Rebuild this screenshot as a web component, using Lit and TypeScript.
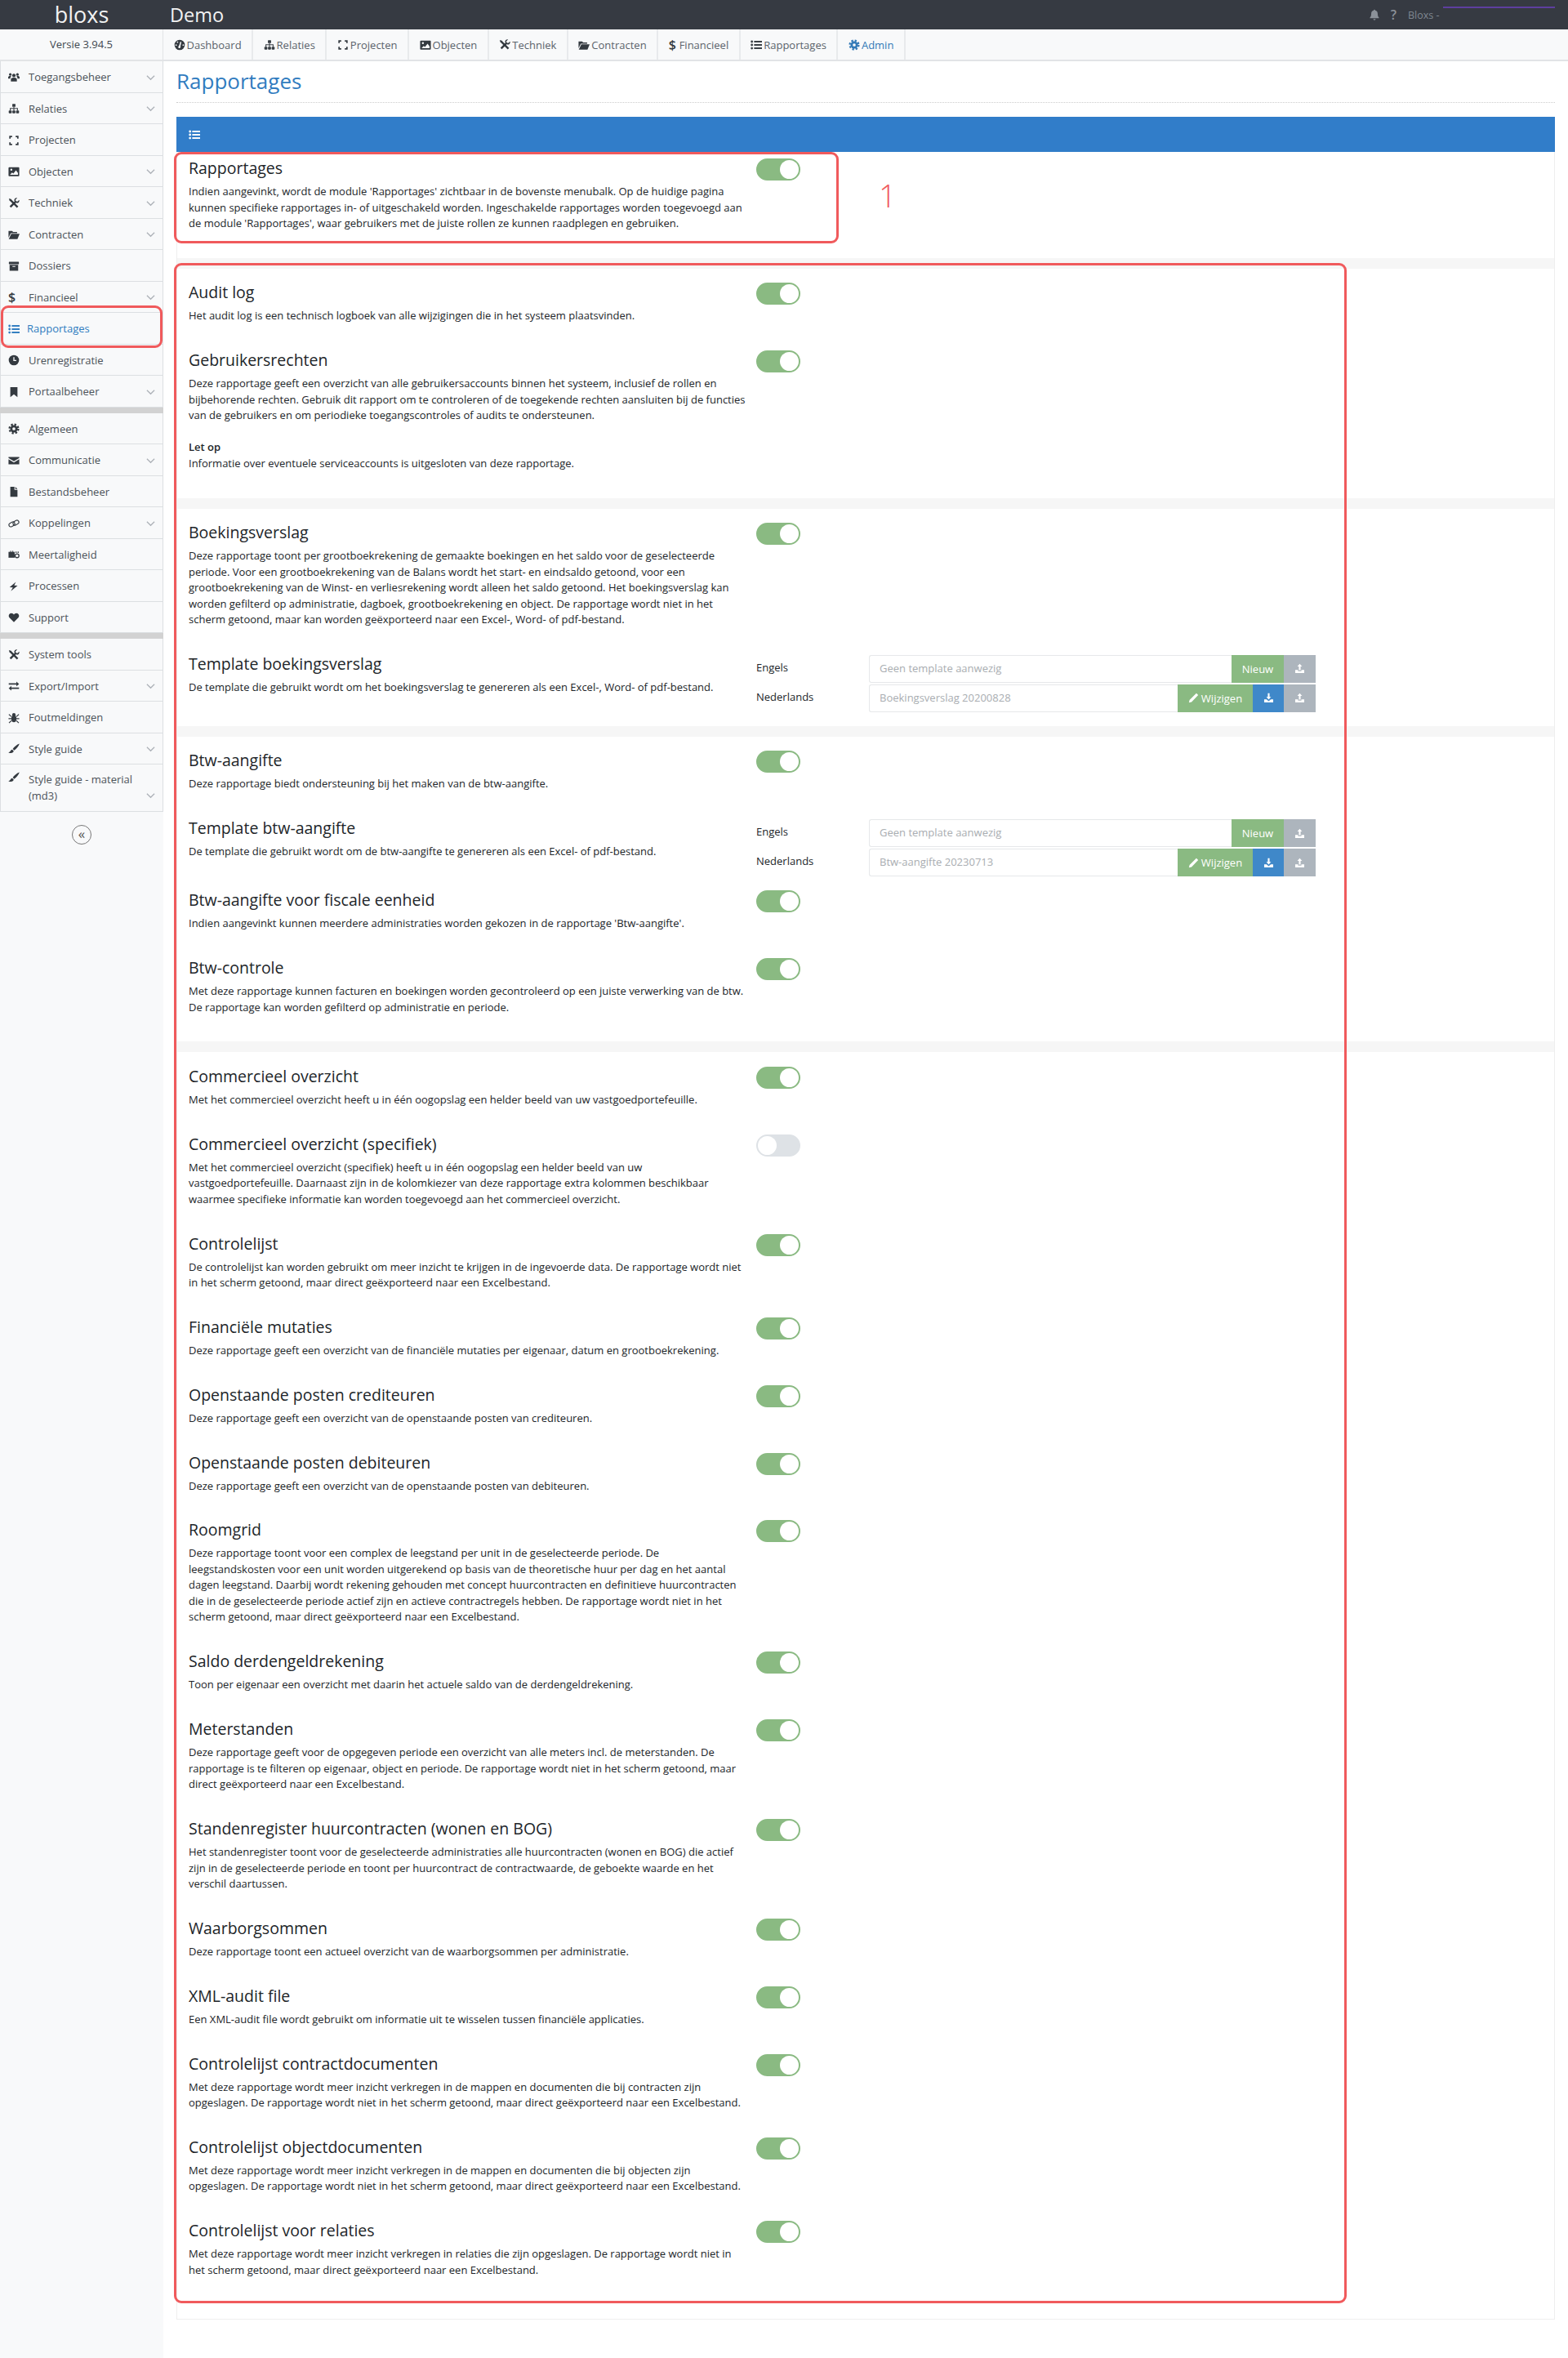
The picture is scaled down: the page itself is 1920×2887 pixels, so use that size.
import { LitElement, html, css, svg } from "lit";
import { customElement } from "lit/decorators.js";

const ICONS: Record<string, any> = {
  users: svg`<circle cx="8" cy="5" r="2.4"/><circle cx="3" cy="3.6" r="1.8"/><circle cx="13" cy="3.6" r="1.8"/><path d="M3.8 13.5v-3C3.8 9 5.5 8 8 8s4.2 1 4.2 2.5v3zM0 9.5V7.6C0 6.4 1 5.8 3 5.8c.6 0 1 .1 1.4.2C3.5 6.8 3 7.8 3 9.5zM16 9.5V7.6c0-1.2-1-1.8-3-1.8-.6 0-1 .1-1.4.2.9.8 1.4 1.8 1.4 3.5z"/>`,
  sitemap: svg`<rect x="5.8" y="1.5" width="4.4" height="4" rx=".6"/><rect x="3.2" y="7.2" width="9.6" height="1.1"/><rect x="7.4" y="5.5" width="1.2" height="5"/><rect x="2.4" y="7.2" width="1.2" height="3.3"/><rect x="12.4" y="7.2" width="1.2" height="3.3"/><rect x=".8" y="10.5" width="4.2" height="4" rx="1"/><rect x="5.9" y="10.5" width="4.2" height="4" rx="1"/><rect x="11" y="10.5" width="4.2" height="4" rx="1"/>`,
  expand: svg`<path d="M2.5 5.5V2.5h3M10.5 2.5h3v3M13.5 10.5v3h-3M5.5 13.5h-3v-3" fill="none" stroke="currentColor" stroke-width="2"/>`,
  image: svg`<rect x=".5" y="2" width="15" height="12.5" rx="1"/><circle cx="4.4" cy="5.4" r="1.4" fill="#f8f9fa"/><path d="M2.5 12.5l3-3.2 1.8 1.6 3.6-4.6 2.8 3.6v2.6z" fill="#f8f9fa"/>`,
  tools: svg`<path d="M2.6 2.6l10.6 10.6" fill="none" stroke="currentColor" stroke-width="2.8"/><path d="M11 5L3 13" fill="none" stroke="currentColor" stroke-width="2.8"/><path d="M15.5 3.2l-2.6 2.3-2.2-.4-.4-2.2L12.8.4c-2.5-.6-4.6 1.2-4.2 3.8l3.2 3.2c2.6.4 4.3-1.7 3.7-4.2zM1 1l2.6.9.8 1.8-.8.8-1.8-.8z"/>`,
  folder: svg`<path d="M.5 3h5l1.4 1.5h5.6V6.3H3.7L.5 12.5zM4.4 7.2H16l-3 7.3H.8z"/>`,
  archive: svg`<rect x="1" y="1.8" width="14" height="3.2" rx=".4"/><path fill-rule="evenodd" d="M2 6h12v8.4H2zM6 7.6v1.2h4V7.6z"/>`,
  list: svg`<circle cx="1.9" cy="3.4" r="1.6"/><circle cx="1.9" cy="8" r="1.6"/><circle cx="1.9" cy="12.6" r="1.6"/><rect x="5" y="2.3" width="11" height="2.2"/><rect x="5" y="6.9" width="11" height="2.2"/><rect x="5" y="11.5" width="11" height="2.2"/>`,
  clock: svg`<circle cx="8" cy="8" r="7.2"/><path d="M8 3.8v4.6h3.4" fill="none" stroke="#f8f9fa" stroke-width="1.5"/>`,
  bookmark: svg`<path d="M3 1.2h10v13.8L8 11.2 3 15z"/>`,
  cog: svg`<circle cx="8" cy="8" r="5.2"/><circle cx="8" cy="8" r="6.2" fill="none" stroke="currentColor" stroke-width="2.6" stroke-dasharray="2.6 2.27"/><circle cx="8" cy="8" r="2.1" fill="#f8f9fa"/>`,
  envelope: svg`<path d="M.5 2.8h15v1.4L8 8.8.5 4.2zM.5 6l7.5 4.6L15.5 6v7.2H.5z"/>`,
  file: svg`<path d="M3 1h5.8v4.4H13V15H3zM10 1l3 3.2h-3z"/>`,
  link: svg`<g fill="none" stroke="currentColor" stroke-width="1.3"><rect x=".8" y="6.6" width="8.6" height="5.2" rx="2.6" transform="rotate(-30 5 9)"/><rect x="6.6" y="4.2" width="8.6" height="5.2" rx="2.6" transform="rotate(-30 11 7)"/></g>`,
  language: svg`<path d="M.5 4.2h8.6v8.2H.5z"/><circle cx="12.4" cy="9.6" r="2.7" fill="none" stroke="currentColor" stroke-width="1.5"/><circle cx="11" cy="4.6" r="1"/><circle cx="14" cy="4.6" r="1"/><rect x="3" y="2.6" width="1" height="2"/><rect x="6" y="2.6" width="1" height="2"/>`,
  bolt: svg`<path d="M10.8 1.8L2 9.2l4.6.2-2.8 5.2 9.4-7.8-4.8-.2z"/>`,
  heart: svg`<path d="M8 14.5L1.8 8.3C-.5 5.5 1.5 2 4.5 2 6 2 7.2 2.8 8 4c.8-1.2 2-2 3.5-2 3 0 5 3.5 2.7 6.3z"/>`,
  exchange: svg`<path d="M.8 4h10.7V1.7L15.3 5l-3.8 3.3V6H.8zM15.2 10H4.5V7.7L.7 11l3.8 3.3V12h10.7z"/>`,
  bug: svg`<ellipse cx="8" cy="9.2" rx="3.6" ry="4.8"/><circle cx="8" cy="3.6" r="2.4"/><path d="M1 3l3.4 3.2M15 3l-3.4 3.2M.5 9h4M15.5 9h-4M1.2 15l3.2-3.2M14.8 15l-3.2-3.2" fill="none" stroke="currentColor" stroke-width="1.4"/>`,
  brush: svg`<path d="M15.8.6c-3.4 1.2-7.6 4.6-9.4 7.4l2 2c2.8-1.8 6.2-5.6 7.4-9.4zM5.6 8.8c-2.4.4-1.8 3.2-5.4 4 3 1.8 7.6 1.2 7.4-2.2z"/>`,
  dash: svg`<path fill-rule="evenodd" d="M8 .8a7.2 7.2 0 110 14.4A7.2 7.2 0 018 .8zM5 3a1 1 0 100 2 1 1 0 000-2zm4 .5L7 9.4a1.6 1.6 0 102 .6l1.4-6zM3 7.2a1 1 0 100 2 1 1 0 000-2zm10 0a1 1 0 100 2 1 1 0 000-2z"/>`,
  bell: svg`<path d="M8 .8a1 1 0 011 1.2c2.2.4 3.5 2.2 3.5 4.5 0 3 .7 4.4 1.8 5.4v1H1.7v-1c1.1-1 1.8-2.4 1.8-5.4 0-2.3 1.3-4.1 3.5-4.5A1 1 0 018 .8zM6.3 14h3.4a1.7 1.7 0 01-3.4 0z"/>`,
  upload: svg`<path d="M8 1l3.6 4H9.3v5.6H6.7V5H4.4zM1.2 10.2h4.3v1.9h5v-1.9h4.3v4.6H1.2z"/>`,
  download: svg`<path d="M6.7 1h2.6v5.4h2.3L8 10.6 4.4 6.4h2.3zM1.2 10.2h3.5L8 13l3.3-2.8h3.5v4.6H1.2z"/>`,
  pencil: svg`<path d="M12.2 1l2.8 2.8L5 14 1 15l1-4zM11 3.2l1.8 1.8"/>`,
};

const icon = (name: string, cls = "ic") =>
  html`<svg class=${cls} viewBox="0 0 16 16" fill="currentColor">${ICONS[name]}</svg>`;

const chevron = html`<svg class="chev" viewBox="0 0 12 8"><path d="M1 1.5l5 5 5-5" fill="none" stroke="currentColor" stroke-width="1.4"/></svg>`;

type Side = { i?: string; t: string; c?: boolean; active?: boolean; two?: boolean; sep?: boolean };
const SIDE: Side[] = [
  { i: "users", t: "Toegangsbeheer", c: true },
  { i: "sitemap", t: "Relaties", c: true },
  { i: "expand", t: "Projecten" },
  { i: "image", t: "Objecten", c: true },
  { i: "tools", t: "Techniek", c: true },
  { i: "folder", t: "Contracten", c: true },
  { i: "archive", t: "Dossiers" },
  { t: "Financieel", c: true },
  { i: "list", t: "Rapportages", active: true },
  { i: "clock", t: "Urenregistratie" },
  { i: "bookmark", t: "Portaalbeheer", c: true },
  { sep: true, t: "" },
  { i: "cog", t: "Algemeen" },
  { i: "envelope", t: "Communicatie", c: true },
  { i: "file", t: "Bestandsbeheer" },
  { i: "link", t: "Koppelingen", c: true },
  { i: "language", t: "Meertaligheid" },
  { i: "bolt", t: "Processen" },
  { i: "heart", t: "Support" },
  { sep: true, t: "" },
  { i: "tools", t: "System tools" },
  { i: "exchange", t: "Export/Import", c: true },
  { i: "bug", t: "Foutmeldingen" },
  { i: "brush", t: "Style guide", c: true },
  { i: "brush", t: "Style guide - material\n(md3)", c: true, two: true },
];

const NAV = [
  { i: "dash", t: "Dashboard" },
  { i: "sitemap", t: "Relaties" },
  { i: "expand", t: "Projecten" },
  { i: "image", t: "Objecten" },
  { i: "tools", t: "Techniek" },
  { i: "folder", t: "Contracten" },
  { t: "Financieel" },
  { i: "list", t: "Rapportages" },
  { i: "cog", t: "Admin", admin: true },
];

type Row = { t: string; d: string; off?: boolean; tpl?: string };
const SECTIONS: { first?: boolean; last?: boolean; rows: Row[] }[] = [
  {
    first: true,
    rows: [
      {
        t: "Rapportages",
        d: "Indien aangevinkt, wordt de module 'Rapportages' zichtbaar in de bovenste menubalk. Op de huidige pagina\nkunnen specifieke rapportages in- of uitgeschakeld worden. Ingeschakelde rapportages worden toegevoegd aan\nde module 'Rapportages', waar gebruikers met de juiste rollen ze kunnen raadplegen en gebruiken.",
      },
    ],
  },
  {
    rows: [
      { t: "Audit log", d: "Het audit log is een technisch logboek van alle wijzigingen die in het systeem plaatsvinden." },
      {
        t: "Gebruikersrechten",
        d: "Deze rapportage geeft een overzicht van alle gebruikersaccounts binnen het systeem, inclusief de rollen en\nbijbehorende rechten. Gebruik dit rapport om te controleren of de toegekende rechten aansluiten bij de functies\nvan de gebruikers en om periodieke toegangscontroles of audits te ondersteunen.\n\n<b>Let op</b>\nInformatie over eventuele serviceaccounts is uitgesloten van deze rapportage.",
      },
    ],
  },
  {
    rows: [
      {
        t: "Boekingsverslag",
        d: "Deze rapportage toont per grootboekrekening de gemaakte boekingen en het saldo voor de geselecteerde\nperiode. Voor een grootboekrekening van de Balans wordt het start- en eindsaldo getoond, voor een\ngrootboekrekening van de Winst- en verliesrekening wordt alleen het saldo getoond. Het boekingsverslag kan\nworden gefilterd op administratie, dagboek, grootboekrekening en object. De rapportage wordt niet in het\nscherm getoond, maar kan worden geëxporteerd naar een Excel-, Word- of pdf-bestand.",
      },
      {
        t: "Template boekingsverslag",
        d: "De template die gebruikt wordt om het boekingsverslag te genereren als een Excel-, Word- of pdf-bestand.",
        tpl: "Boekingsverslag 20200828",
      },
    ],
  },
  {
    rows: [
      { t: "Btw-aangifte", d: "Deze rapportage biedt ondersteuning bij het maken van de btw-aangifte." },
      {
        t: "Template btw-aangifte",
        d: "De template die gebruikt wordt om de btw-aangifte te genereren als een Excel- of pdf-bestand.",
        tpl: "Btw-aangifte 20230713",
      },
      { t: "Btw-aangifte voor fiscale eenheid", d: "Indien aangevinkt kunnen meerdere administraties worden gekozen in de rapportage 'Btw-aangifte'." },
      {
        t: "Btw-controle",
        d: "Met deze rapportage kunnen facturen en boekingen worden gecontroleerd op een juiste verwerking van de btw.\nDe rapportage kan worden gefilterd op administratie en periode.",
      },
    ],
  },
  {
    last: true,
    rows: [
      { t: "Commercieel overzicht", d: "Met het commercieel overzicht heeft u in één oogopslag een helder beeld van uw vastgoedportefeuille." },
      {
        t: "Commercieel overzicht (specifiek)",
        off: true,
        d: "Met het commercieel overzicht (specifiek) heeft u in één oogopslag een helder beeld van uw\nvastgoedportefeuille. Daarnaast zijn in de kolomkiezer van deze rapportage extra kolommen beschikbaar\nwaarmee specifieke informatie kan worden toegevoegd aan het commercieel overzicht.",
      },
      {
        t: "Controlelijst",
        d: "De controlelijst kan worden gebruikt om meer inzicht te krijgen in de ingevoerde data. De rapportage wordt niet\nin het scherm getoond, maar direct geëxporteerd naar een Excelbestand.",
      },
      { t: "Financiële mutaties", d: "Deze rapportage geeft een overzicht van de financiële mutaties per eigenaar, datum en grootboekrekening." },
      { t: "Openstaande posten crediteuren", d: "Deze rapportage geeft een overzicht van de openstaande posten van crediteuren." },
      { t: "Openstaande posten debiteuren", d: "Deze rapportage geeft een overzicht van de openstaande posten van debiteuren." },
      {
        t: "Roomgrid",
        d: "Deze rapportage toont voor een complex de leegstand per unit in de geselecteerde periode. De\nleegstandskosten voor een unit worden uitgerekend op basis van de theoretische huur per dag en het aantal\ndagen leegstand. Daarbij wordt rekening gehouden met concept huurcontracten en definitieve huurcontracten\ndie in de geselecteerde periode actief zijn en actieve contractregels hebben. De rapportage wordt niet in het\nscherm getoond, maar direct geëxporteerd naar een Excelbestand.",
      },
      { t: "Saldo derdengeldrekening", d: "Toon per eigenaar een overzicht met daarin het actuele saldo van de derdengeldrekening." },
      {
        t: "Meterstanden",
        d: "Deze rapportage geeft voor de opgegeven periode een overzicht van alle meters incl. de meterstanden. De\nrapportage is te filteren op eigenaar, object en periode. De rapportage wordt niet in het scherm getoond, maar\ndirect geëxporteerd naar een Excelbestand.",
      },
      {
        t: "Standenregister huurcontracten (wonen en BOG)",
        d: "Het standenregister toont voor de geselecteerde administraties alle huurcontracten (wonen en BOG) die actief\nzijn in de geselecteerde periode en toont per huurcontract de contractwaarde, de geboekte waarde en het\nverschil daartussen.",
      },
      { t: "Waarborgsommen", d: "Deze rapportage toont een actueel overzicht van de waarborgsommen per administratie." },
      { t: "XML-audit file", d: "Een XML-audit file wordt gebruikt om informatie uit te wisselen tussen financiële applicaties." },
      {
        t: "Controlelijst contractdocumenten",
        d: "Met deze rapportage wordt meer inzicht verkregen in de mappen en documenten die bij contracten zijn\nopgeslagen. De rapportage wordt niet in het scherm getoond, maar direct geëxporteerd naar een Excelbestand.",
      },
      {
        t: "Controlelijst objectdocumenten",
        d: "Met deze rapportage wordt meer inzicht verkregen in de mappen en documenten die bij objecten zijn\nopgeslagen. De rapportage wordt niet in het scherm getoond, maar direct geëxporteerd naar een Excelbestand.",
      },
      {
        t: "Controlelijst voor relaties",
        d: "Met deze rapportage wordt meer inzicht verkregen in relaties die zijn opgeslagen. De rapportage wordt niet in\nhet scherm getoond, maar direct geëxporteerd naar een Excelbestand.",
      },
    ],
  },
];

@customElement("app-root")
export class AppRoot extends LitElement {
  static styles = css`
    :host {
      display: block;
      position: relative;
      min-height: 2887px;
      font-family: "Open Sans", "Liberation Sans", sans-serif;
      font-size: 13px;
      color: #212529;
      background: #fff;
    }
    * { box-sizing: border-box; }
    .ic { width: 14px; height: 14px; flex: none; display: block; }
    .top {
      height: 36px;
      background: #363a42;
      display: flex;
      align-items: center;
      color: #f2f2f2;
    }
    .logo { width: 200px; text-align: center; font-size: 27px; line-height: 36px; }
    .demo { margin-left: 8px; font-size: 23.5px; line-height: 36px; flex: 1; }
    .tr { display: flex; align-items: center; color: #8b9199; padding-right: 16px; height: 36px; position: relative; }
    .bell { width: 14px; height: 14px; margin-right: 13px; }
    .q { font-size: 16px; font-weight: 600; margin-right: 14px; }
    .who { font-size: 12.5px; width: 180px; color: #7f8791; }
    .purple { position: absolute; right: 16px; top: 8px; width: 137px; height: 2px; background: #5e3f9f; }
    .body { display: flex; min-height: 2851px; }
    .side { width: 200px; flex: none; background: #f8f9fa; }
    .ver {
      height: 39px;
      text-align: center;
      font-size: 13px;
      line-height: 37px;
      color: #3f4750;
      border-bottom: 2px solid #e2e4e6;
      border-right: 1px solid #e2e4e6;
    }
    .item {
      height: 38.5px;
      display: flex;
      align-items: center;
      padding: 2px 0 0 9px;
      font-size: 13px;
      color: #4b5259;
      border-left: 1px solid #dcdfe2;
      border-right: 1px solid #dcdfe2;
      border-bottom: 1px solid #dcdfe2;
    }
    .item .ic { color: #343a40; }
    .item .lb { margin-left: 11px; flex: 1; white-space: pre-line; line-height: 19.5px; }
    .item.active, .item.active .ic { color: #2f7cc0; }
    .item.active .lb { margin-left: 9px; }
    .item.two { height: 58px; align-items: flex-start; padding-top: 9px; }
    .item.two .chev { margin-top: 25px; }
    .dollar { width: 14px; font-size: 16px; font-weight: 600; color: #343a40; text-align: left; line-height: 16px; }
    .chev { width: 11px; height: 8px; color: #adb2b8; margin-right: 9px; flex: none; }
    .thick { height: 7px; background: #d2d2d2; }
    .coll { display: flex; justify-content: center; padding-top: 16px; }
    .circle {
      width: 24px; height: 24px; border-radius: 50%;
      border: 1px solid #777;
      color: #555;
      display: flex; align-items: center; justify-content: center;
      font-size: 17px; line-height: 18px; padding-bottom: 3px;
    }
    .main { flex: 1; min-width: 0; }
    .nav {
      height: 39px;
      background: #f8f9fa;
      border-bottom: 2px solid #e2e4e6;
      display: flex;
    }
    .nv {
      display: flex; align-items: center; gap: 2px;
      padding: 0 12.5px;
      font-size: 13px;
      color: #5b636b;
      border-right: 2px solid #e8eaec;
      height: 37px;
    }
    .nv .ic { color: #343a40; }
    .nv .dollar { width: 9px; margin-right: 2px; }
    .nv.admin, .nv.admin .ic { color: #337ab7; }
    .content { padding: 0 16px; }
    h1 {
      margin: 0;
      height: 51px;
      font-weight: 400;
      font-size: 26px;
      line-height: 48px;
      color: #317cbf;
      border-bottom: 1px dotted #ccc;
    }
    .panel { margin-top: 17px; border: 1px solid #eee; border-top: 0; }
    .bar { height: 43px; margin: 0 -1px; background: #317dc9; color: #fff; display: flex; align-items: center; padding-left: 15px; }
    .sec { padding: 9.5px 14px 8px; }
    .sec.first { padding-top: 0; }
    .sec.last { padding-bottom: 25px; }
    .sep { height: 13px; background: #f6f6f6; }
    .row { display: flex; padding-top: 8px; }
    .txt { width: 695px; flex: none; padding-bottom: 24.35px; }
    .tt { font-size: 19.5px; line-height: 27px; margin: -2px 0 6px; }
    .ds { white-space: pre-line; line-height: 19.5px; font-size: 13px; }
    .ds b { font-weight: 600; }
    .tog {
      width: 54px; height: 27px; border-radius: 14px;
      background: #8aba82;
      border: 2px solid #8aba82;
      display: flex; justify-content: flex-end;
    }
    .tog::after { content: ""; width: 23px; height: 23px; border-radius: 50%; background: #fff; }
    .tog.off { background: #dee2e6; border-color: #dee2e6; justify-content: flex-start; }
    .tpl { padding: 1px 0 7px; }
    .ln { display: flex; align-items: stretch; height: 34px; width: 685px; margin-bottom: 2px; }
    .lab { width: 138px; font-size: 13px; line-height: 31px; flex: none; color: #212529; }
    .inp {
      flex: 1;
      border: 1px solid #e6e8ea;
      border-right: 0;
      border-radius: 3px 0 0 3px;
      padding-left: 12px;
      font-size: 13px;
      line-height: 31px;
      color: #a9adb1;
    }
    .b { display: flex; align-items: center; justify-content: center; color: #fff; font-size: 13px; gap: 3px; }
    .b .ic { width: 13px; height: 13px; }
    .g { background: #8aba82; }
    .nw { width: 64px; }
    .wz { width: 92px; }
    .bl { background: #3f88c9; width: 38px; }
    .gy { background: #adb5bd; width: 39px; }
    .red { position: absolute; border: 3px solid #f05a5c; border-radius: 9px; pointer-events: none; }
    .r1 { left: 213px; top: 186px; width: 814px; height: 112px; }
    .r2 { left: 213px; top: 322px; width: 1436px; height: 2498px; }
    .r3 { left: 1px; top: 374px; width: 198px; height: 52px; }
    .one { position: absolute; left: 1076px; top: 213px; font-size: 38px; line-height: 52px; font-weight: 300; color: #f05a5c; }
  `;

  private desc(d: string) {
    const m = d.split("<b>");
    if (m.length === 1) return d;
    const [b, rest] = m[1].split("</b>");
    return html`${m[0]}<b>${b}</b>${rest}`;
  }

  private tpl(name: string) {
    return html`<div class="tpl">
      <div class="ln">
        <div class="lab">Engels</div>
        <div class="inp">Geen template aanwezig</div>
        <div class="b g nw">Nieuw</div>
        <div class="b gy">${icon("upload")}</div>
      </div>
      <div class="ln">
        <div class="lab">Nederlands</div>
        <div class="inp">${name}</div>
        <div class="b g wz">${icon("pencil")}Wijzigen</div>
        <div class="b bl">${icon("download")}</div>
        <div class="b gy">${icon("upload")}</div>
      </div>
    </div>`;
  }

  render() {
    return html`
      <div class="top">
        <div class="logo">bloxs</div>
        <div class="demo">Demo</div>
        <div class="tr">
          ${icon("bell", "bell")}
          <span class="q">?</span>
          <span class="who">Bloxs -</span>
          <div class="purple"></div>
        </div>
      </div>
      <div class="body">
        <aside class="side">
          <div class="ver">Versie 3.94.5</div>
          ${SIDE.map((s) =>
            s.sep
              ? html`<div class="thick"></div>`
              : html`<div class="item ${s.active ? "active" : ""} ${s.two ? "two" : ""}">
                  ${s.i ? icon(s.i) : html`<span class="dollar">$</span>`}
                  <span class="lb">${s.t}</span>
                  ${s.c ? chevron : ""}
                </div>`
          )}
          <div class="coll"><div class="circle">«</div></div>
        </aside>
        <div class="main">
          <nav class="nav">
            ${NAV.map(
              (n) => html`<div class="nv ${n.admin ? "admin" : ""}">
                ${n.i ? icon(n.i) : html`<span class="dollar">$</span>`}<span>${n.t}</span>
              </div>`
            )}
          </nav>
          <div class="content">
            <h1>Rapportages</h1>
            <div class="panel">
              <div class="bar">${icon("list")}</div>
              ${SECTIONS.map(
                (s, i) => html`
                  ${i ? html`<div class="sep"></div>` : ""}
                  <div class="sec ${s.first ? "first" : ""} ${s.last ? "last" : ""}">
                    ${s.rows.map(
                      (r) => html`<div class="row">
                        <div class="txt">
                          <div class="tt">${r.t}</div>
                          <div class="ds">${this.desc(r.d)}</div>
                        </div>
                        ${r.tpl ? this.tpl(r.tpl) : html`<div class="tog ${r.off ? "off" : ""}"></div>`}
                      </div>`
                    )}
                  </div>
                `
              )}
            </div>
          </div>
        </div>
      </div>
      <div class="red r1"></div>
      <div class="red r2"></div>
      <div class="red r3"></div>
      <div class="one">1</div>
    `;
  }
}
